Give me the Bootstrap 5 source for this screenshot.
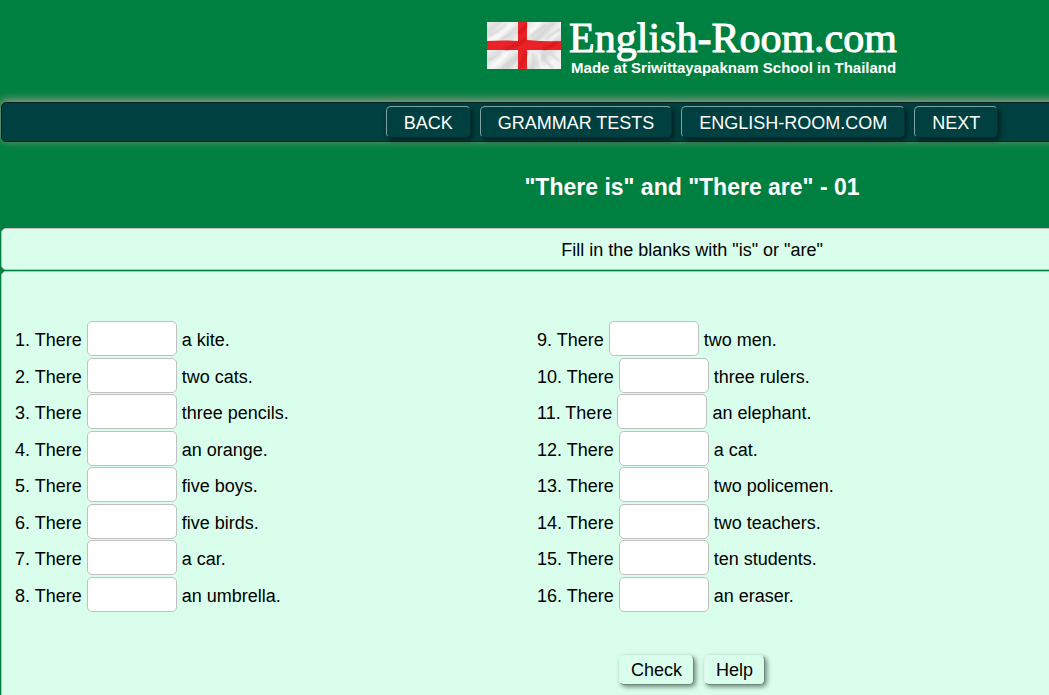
<!DOCTYPE html>
<html lang="en">
<head>
<meta charset="utf-8">
<meta name="viewport" content="width=device-width, initial-scale=1">
<title>"There is" and "There are" - 01</title>
<link href="https://cdn.jsdelivr.net/npm/bootstrap@5.3.0/dist/css/bootstrap.min.css" rel="stylesheet">
<style>
  body { background: #008040; color: #000; font-family: "Liberation Sans", Arial, sans-serif; font-size: 18px; line-height: 24px; overflow-x: hidden; }
  /* the sheet is laid out for wide screens and keeps its width on narrow ones */
  .sheet { min-width: 1384px; padding-left: 1px; padding-right: 1px; }
  .masthead { height: 102px; padding-top: 16px; gap: 8px; }
  .flag { width: 74px; height: 47px; margin-top: 6px; }
  .brand-name { font-family: "Liberation Serif", "Times New Roman", serif; font-size: 42px; line-height: 44px; -webkit-text-stroke: 1px #fff; }
  .brand-line { font-size: 15px; line-height: 16px; padding-left: 2px; }
  .menu { height: 40px; gap: 9px; background: #004040; border: 1px solid #002020; border-radius: 5px; box-shadow: 0 -2px 10px rgba(224, 160, 170, .8); }
  .menu .btn { height: 32px; padding: 2px 17px 0; font-size: 18px; line-height: 24px; color: #fff; background: #004040; border: 1px solid; border-color: #7fa3a3 #003434 #003030 #7fa3a3; border-radius: 5px; box-shadow: 2px 2px 5px #001c1c; }
  .menu .btn:hover { background: #005050; }
  .heading { font-size: 23px; line-height: 30px; margin: 30px 0 26px; }
  .panel { background: #d9ffec; border: 1px solid #c0c0c0; border-radius: 5px; }
  .intro { height: 42px; margin-bottom: 1px; padding-top: 2px; }
  .quiz { min-height: 460px; padding: 49px 13px 32px; }
  .questions { display: grid; grid-template-columns: 522px 1fr; }
  .questions ol { display: grid; grid-template-rows: repeat(8, 1fr); height: 292px; }
  .questions li { white-space: nowrap; }
  .questions input { display: inline-block; width: 90px; height: 35px; padding: 6px 4px 2px; font-size: 18px; line-height: 24px; text-align: center; border: 1px solid #c0c0c0; border-radius: 5px; vertical-align: baseline; }
  .actions { gap: 10px; margin-top: 42px; }
  .actions .btn { height: 30px; padding: 0 11px; font-size: 18px; line-height: 24px; color: #000; background: #d9ffec; border: 1px solid; border-color: #e4f4ec #6f8a7c #6f8a7c #e4f4ec; border-radius: 5px; box-shadow: 2px 2px 5px #6f8a7c; }
</style>
</head>
<body>
<div class="sheet">
  <header class="masthead d-flex justify-content-center text-white">
    <svg class="flag" viewBox="0 0 74 47" role="img" aria-label="Flag of England">
      <defs>
        <linearGradient id="cloth" x1="0" y1="0" x2="1" y2=".65">
          <stop offset="0" stop-color="#ececec"/><stop offset=".12" stop-color="#dcdcdc"/><stop offset=".2" stop-color="#f7f7f7"/>
          <stop offset=".38" stop-color="#e2e2e2"/><stop offset=".5" stop-color="#f6f6f6"/><stop offset=".64" stop-color="#d6d6d6"/>
          <stop offset=".72" stop-color="#f1f1f1"/><stop offset=".88" stop-color="#dadada"/><stop offset="1" stop-color="#f4f4f4"/>
        </linearGradient>
        <filter id="soft"><feGaussianBlur stdDeviation="1"/></filter>
        <clipPath id="edge"><path d="M0 0h74v47H0z"/></clipPath>
      </defs>
      <path fill="url(#cloth)" d="M0 0h74v47H0z"/>
      <g clip-path="url(#edge)">
        <g filter="url(#soft)" fill="none" stroke="#cccccc" stroke-width="1.5">
          <path d="M2 14Q12 10 20 1M13 18Q22 14 30 5M1 38Q9 36 14 29M15 46Q23 40 30 33M43 15Q50 8 59 3M58 18Q67 10 74 7M45 31Q49 38 45 46M55 30Q57 39 66 46M65 31Q67 36 73 39"/>
          <path stroke="#fff" d="M6 17Q16 12 25 2M5 44Q16 38 20 30M44 10Q49 6 52 2M52 31Q52 41 56 46M64 17Q70 12 74 11"/>
        </g>
        <path fill="#ea2227" d="M31 0H40V18Q60 20 74 19V28Q55 28 40 28V47H31V28Q16 28 0 28V19Q16 18 31 19Z"/>
        <path filter="url(#soft)" fill="none" stroke="#c9161d" stroke-width="2" d="M18 27Q28 25 39 17M32 45Q38 39 39 30M32 11Q38 7 39 2M56 27Q64 25 70 20"/>
      </g>
    </svg>
    <div>
      <div class="brand-name">English-Room.com</div>
      <div class="brand-line fw-bold">Made at Sriwittayapaknam School in Thailand</div>
    </div>
  </header>

  <nav class="menu d-flex justify-content-center align-items-center" aria-label="Main">
    <button type="button" class="btn">BACK</button>
    <button type="button" class="btn">GRAMMAR TESTS</button>
    <button type="button" class="btn">ENGLISH-ROOM.COM</button>
    <button type="button" class="btn">NEXT</button>
  </nav>

  <main>
    <h1 class="heading text-center text-white fw-bold">"There is" and "There are" - 01</h1>
    <div class="panel intro d-flex justify-content-center align-items-center">Fill in the blanks with "is" or "are"</div>
    <form class="panel quiz">
      <div class="questions">
        <ol class="list-unstyled mb-0">
          <li><label>1. There <input type="text"> a kite.</label></li>
          <li><label>2. There <input type="text"> two cats.</label></li>
          <li><label>3. There <input type="text"> three pencils.</label></li>
          <li><label>4. There <input type="text"> an orange.</label></li>
          <li><label>5. There <input type="text"> five boys.</label></li>
          <li><label>6. There <input type="text"> five birds.</label></li>
          <li><label>7. There <input type="text"> a car.</label></li>
          <li><label>8. There <input type="text"> an umbrella.</label></li>
        </ol>
        <ol class="list-unstyled mb-0">
          <li><label>9. There <input type="text"> two men.</label></li>
          <li><label>10. There <input type="text"> three rulers.</label></li>
          <li><label>11. There <input type="text"> an elephant.</label></li>
          <li><label>12. There <input type="text"> a cat.</label></li>
          <li><label>13. There <input type="text"> two policemen.</label></li>
          <li><label>14. There <input type="text"> two teachers.</label></li>
          <li><label>15. There <input type="text"> ten students.</label></li>
          <li><label>16. There <input type="text"> an eraser.</label></li>
        </ol>
      </div>
      <div class="actions d-flex justify-content-center">
        <button type="button" class="btn">Check</button>
        <button type="button" class="btn">Help</button>
      </div>
    </form>
  </main>
</div>
<script src="https://cdn.jsdelivr.net/npm/bootstrap@5.3.0/dist/js/bootstrap.bundle.min.js"></script>
</body>
</html>
